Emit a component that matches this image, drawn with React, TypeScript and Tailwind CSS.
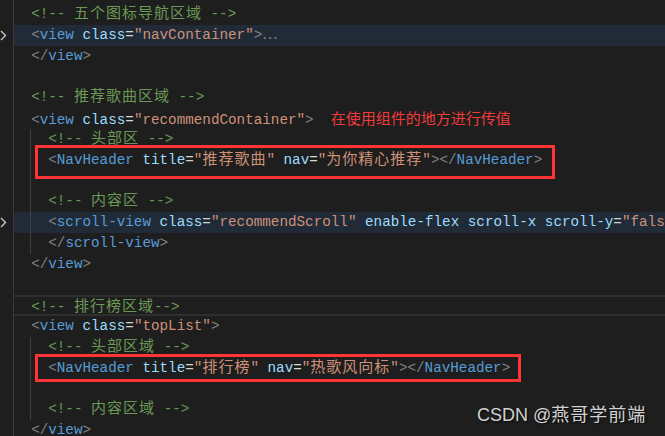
import React from "react";

type Tok = [string, string];

const P = "text-[#808080]";
const T = "text-[#569cd6]";
const A = "text-[#9cdcfe]";
const E = "text-[#d4d4d4]";
const S = "text-[#ce9178]";
const C = "text-[#6a9955]";
const W = "text-[#d4d4d4]";

function Cjk({ text }: { text: string }) {
  const parts = text.split(/([\u3400-\u9fff\uff00-\uffef]+)/);
  return (
    <>
      {parts.map((p, i) =>
        /[\u3400-\u9fff\uff00-\uffef]/.test(p) ? (
          <span key={i} className="text-[15px] tracking-[1px]">
            {p}
          </span>
        ) : (
          <React.Fragment key={i}>{p}</React.Fragment>
        )
      )}
    </>
  );
}

type Line = {
  toks: Tok[];
  hl?: boolean;
  boxed?: boolean;
  guide?: boolean;
  chevron?: boolean;
  note?: string;
};

const lines: Line[] = [
  { toks: [[W, "  "], [C, "<!-- 五个图标导航区域 -->"]] },
  {
    toks: [[W, "  "], [P, "<"], [T, "view"], [W, " "], [A, "class"], [E, "="], [S, '"navContainer"'], [P, ">"], [P, "⋯"]],
    hl: true,
    chevron: true,
  },
  { toks: [[W, "  "], [P, "</"], [T, "view"], [P, ">"]] },
  { toks: [] },
  { toks: [[W, "  "], [C, "<!-- 推荐歌曲区域 -->"]] },
  {
    toks: [[W, "  "], [P, "<"], [T, "view"], [W, " "], [A, "class"], [E, "="], [S, '"recommendContainer"'], [P, ">"]],
    note: "在使用组件的地方进行传值",
  },
  { toks: [[W, "    "], [C, "<!-- 头部区 -->"]], guide: true },
  {
    toks: [[W, "    "], [P, "<"], [T, "NavHeader"], [W, " "], [A, "title"], [E, "="], [S, '"推荐歌曲"'], [W, " "], [A, "nav"], [E, "="], [S, '"为你精心推荐"'], [P, "></"], [T, "NavHeader"], [P, ">"]],
    guide: true,
  },
  { toks: [], guide: true },
  { toks: [[W, "    "], [C, "<!-- 内容区 -->"]], guide: true },
  {
    toks: [[W, "    "], [P, "<"], [T, "scroll-view"], [W, " "], [A, "class"], [E, "="], [S, '"recommendScroll"'], [W, " "], [A, "enable-flex"], [W, " "], [A, "scroll-x"], [W, " "], [A, "scroll-y"], [E, "="], [S, '"false"']],
    hl: true,
    guide: true,
    chevron: true,
  },
  { toks: [[W, "    "], [P, "</"], [T, "scroll-view"], [P, ">"]], guide: true },
  { toks: [[W, "  "], [P, "</"], [T, "view"], [P, ">"]] },
  { toks: [] },
  { toks: [[W, "  "], [C, "<!-- 排行榜区域-->"]], boxed: true },
  { toks: [[W, "  "], [P, "<"], [T, "view"], [W, " "], [A, "class"], [E, "="], [S, '"topList"'], [P, ">"]] },
  { toks: [[W, "    "], [C, "<!-- 头部区域 -->"]], guide: true },
  {
    toks: [[W, "    "], [P, "<"], [T, "NavHeader"], [W, " "], [A, "title"], [E, "="], [S, '"排行榜"'], [W, " "], [A, "nav"], [E, "="], [S, '"热歌风向标"'], [P, "></"], [T, "NavHeader"], [P, ">"]],
    guide: true,
  },
  { toks: [], guide: true },
  { toks: [[W, "    "], [C, "<!-- 内容区域 -->"]], guide: true },
  { toks: [[W, "  "], [P, "</"], [T, "view"], [P, ">"]] },
];

function Chevron() {
  return (
    <svg width="7" height="11" viewBox="0 0 7 11" className="block">
      <polyline points="1,1 5.5,5.5 1,10" fill="none" stroke="#c5c5c5" strokeWidth="1.4" />
    </svg>
  );
}

export default function App() {
  return (
    <div className="relative w-[665px] h-[436px] overflow-hidden bg-[#1e1e1e] flex">
      <div className="w-[13px] shrink-0 pt-[4px]">
        {lines.map((l, i) => (
          <div key={i} className="h-[20.8px] flex items-center">
            {l.chevron ? <Chevron /> : null}
          </div>
        ))}
      </div>
      <div className="w-px shrink-0 bg-[#3a3a3a]" />
      <div className="flex-1 min-w-0 pt-[4px] font-['Liberation_Mono','Noto_Sans_CJK_SC',monospace] text-[14.27px]">
        {lines.map((l, i) => (
          <div
            key={i}
            className={
              "relative h-[20.8px] leading-[20.8px] whitespace-pre overflow-hidden " +
              (l.hl ? "bg-[#212b37] " : "") +
              (l.boxed ? "border-y-2 border-[#2e2e2e] leading-[16.8px] " : "")
            }
          >
            {l.guide ? <div className="absolute left-[16px] top-0 bottom-0 w-px bg-[#404040]" /> : null}
            <span className="relative">
              {l.toks.map((t, j) => (
                <span key={j} className={t[0]}>
                  <Cjk text={t[1]} />
                </span>
              ))}
              {l.note ? (
                <span className="ml-[17px] text-[15px] text-[#f23a3a] font-['Noto_Sans_CJK_SC',sans-serif]">{l.note}</span>
              ) : null}
            </span>
          </div>
        ))}
      </div>

      <div className="absolute left-[35px] top-[145px] w-[520px] h-[34px] border-[3px] border-[#ff3434]" />
      <div className="absolute left-[35px] top-[354px] w-[486px] h-[28px] border-[3px] border-[#ff3434]" />

      <div className="absolute left-[477px] top-[402px] text-[18px] leading-[26px] text-[#d2d2d2] font-['Liberation_Sans','Noto_Sans_CJK_SC',sans-serif] [text-shadow:1px_1px_2px_rgba(0,0,0,0.8)] whitespace-nowrap">
        CSDN @<span className="tracking-[1px]">燕哥学前端</span>
      </div>
    </div>
  );
}
